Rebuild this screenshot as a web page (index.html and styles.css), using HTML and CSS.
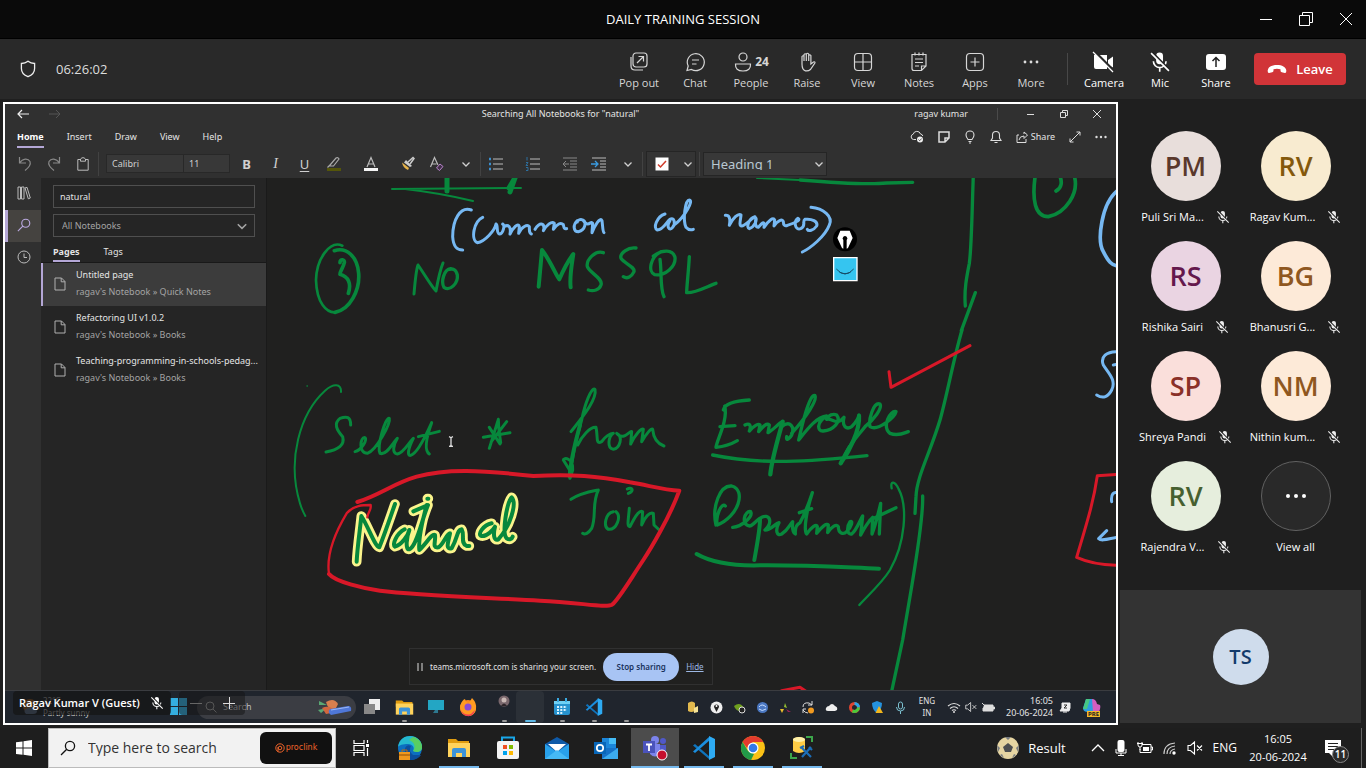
FILE: index.html
```html
<!DOCTYPE html>
<html lang="en">
<head>
<meta charset="utf-8">
<title>DAILY TRAINING SESSION</title>
<link rel="stylesheet" href="styles.css">
</head>
<body>
<svg class="defs" aria-hidden="true">
  <symbol id="mic-off" viewBox="0 0 16 16"><rect x="5.2" y="1" width="5" height="8.6" rx="2.5" fill="currentColor"/><path d="M3.2 7.5a4.6 4.6 0 0 0 9.2 0M7.8 12v3" fill="none" stroke="currentColor" stroke-width="1.2"/><path d="M2.6 1.2 14.8 13.6" stroke="#222" stroke-width="1.6"/><path d="M1.5 1.5 14.5 14.5" stroke="currentColor" stroke-width="1.2"/></symbol>
  <symbol id="chev" viewBox="0 0 10 10"><path d="M1.5 3.500 5 7l3.500-3.500" fill="none" stroke="currentColor" stroke-width="1.3"/></symbol>
  <symbol id="page" viewBox="0 0 12 14"><path d="M1 1h6.500L11 4.500V13H1zM7.200 1v3.800H11" fill="none" stroke="currentColor"/></symbol>
  <symbol id="find" viewBox="0 0 16 16"><circle cx="10" cy="6" r="4.600" fill="none" stroke="currentColor" stroke-width="1.300"/><path d="M6.700 9.300 1 15" stroke="currentColor" stroke-width="1.300"/></symbol>
  <symbol id="folder" viewBox="0 0 24 24"><path d="M1 3h8l2 2h11v6H1z" fill="#e09c10"/><path d="M1 7h22v14H1z" fill="#ffd35c"/><path d="M5 21v-7q0-2 2-2h10q2 0 2 2v7h-4v-4H9v4z" fill="#3c93d8"/></symbol>
  <symbol id="vscode" viewBox="0 0 24 24"><path d="M1 9.500 3 8l15 13-1 2z" fill="#0f74bd"/><path d="M1 15.500 3 17 18 4l-1-3z" fill="#1b8fdf"/><path d="m17 0 6 3v18l-6 3z" fill="#2eabf3"/></symbol>
  <symbol id="vol" viewBox="0 0 16 16"><path d="M1 5.500h2.500L7.500 2v12l-4-3.500H1zM10 5.500l5 5M15 5.500l-5 5" fill="none" stroke="currentColor" stroke-width="1.100"/></symbol>
</svg>

<header class="titlebar">
  <h1>DAILY TRAINING SESSION</h1>
  <div class="window-buttons">
    <button aria-label="Minimize"><svg width="14" height="14"><path d="M1 7.500h12" stroke="#fff"/></svg></button>
    <button aria-label="Restore"><svg width="14" height="14"><path d="M.5 3.500h10v10H.5zM3.500 3V.5h10v10H11" fill="none" stroke="#fff"/></svg></button>
    <button aria-label="Close"><svg width="14" height="14"><path d="M1 1l12 12M13 1 1 13" stroke="#fff"/></svg></button>
  </div>
</header>

<nav class="meeting-bar">
  <svg class="shield" width="16" height="18" viewBox="0 0 16 18"><path d="M8 1.200c2 1.600 4.200 2.300 6.600 2.300v5c0 4-2.600 6.700-6.600 8.200C4 15.200 1.400 12.500 1.400 8.500v-5C3.800 3.500 6 2.800 8 1.200z" fill="none" stroke="#eee" stroke-width="1.300"/></svg>
  <time>06:26:02</time>
  <div class="tools">
    <button><svg width="20" height="20" viewBox="0 0 20 20"><rect x="4" y="1" width="14" height="14" rx="3"/><path d="M2 5v9q0 4 4 4h8M8 11l6-6M9.500 4.500h5v5"/></svg>Pop out</button>
    <button><svg width="20" height="20" viewBox="0 0 20 20"><path d="M2 18.500 3.200 14A8.500 8.500 0 1 1 6.500 17.500zM7 8h7M7 12h4.500"/></svg>Chat</button>
    <button><span class="with-count"><svg width="20" height="20" viewBox="0 0 20 20"><circle cx="10" cy="5" r="4"/><path d="M2.500 12h15q.5 7-7.500 7t-7.500-7z"/></svg><b>24</b></span>People</button>
    <button><svg width="20" height="20" viewBox="0 0 20 20"><path d="M5 12V4.500q1-1.500 2 0V9M7 9V2.500q1.200-1.500 2.300 0V9M9.300 9V2q1.200-1.500 2.400 0v7M11.700 9V3.500q1.200-1.300 2.200 0V12l2.500-2q2-.5 1.500 1l-4.500 6.500q-2 1.800-5 1.300Q5 18 5 12"/></svg>Raise</button>
    <button><svg width="20" height="20" viewBox="0 0 20 20"><rect x="1.500" y="1.500" width="17" height="17" rx="3.500"/><path d="M10 1.500v17M1.500 10h17"/></svg>View</button>
    <button><svg width="20" height="20" viewBox="0 0 20 20"><path d="M3 2.500h14V14l-4.500 4.500H5q-2 0-2-2zM17 14h-4.500v4.500M6 .5v3M10 .5v3M14 .5v3M6 7h8M6 10.500h8M6 14h4"/></svg>Notes</button>
    <button><svg width="20" height="20" viewBox="0 0 20 20"><rect x="1.500" y="1.500" width="17" height="17" rx="3.500"/><path d="M10 5.500v9M5.500 10h9"/></svg>Apps</button>
    <button><svg width="20" height="20" viewBox="0 0 20 20"><g fill="#ddd" stroke="none"><circle cx="4" cy="10" r="1.400"/><circle cx="10" cy="10" r="1.400"/><circle cx="16" cy="10" r="1.400"/></g></svg>More</button>
    <span class="divider"></span>
    <button class="strong"><svg width="22" height="20" viewBox="0 0 22 20"><path d="M1 3h13v14H3q-2 0-2-2zM15 8l5-3.500v11L15 13z" fill="#fff" stroke="none"/><path d="M1.500-.5 20 18" stroke="#292929" stroke-width="2.500"/><path d="m0 0 20 20" stroke="#fff"/></svg>Camera</button>
    <button class="strong"><svg width="22" height="22" viewBox="0 0 16 16"><use href="#mic-off"/></svg>Mic</button>
    <button class="strong"><svg width="20" height="20" viewBox="0 0 20 20"><rect x="0" y="2" width="20" height="16" rx="3" fill="#fff" stroke="none"/><path d="M10 15V5.500M6.500 9 10 5.500 13.500 9" stroke="#222" stroke-width="1.500"/></svg>Share</button>
  </div>
  <button class="leave"><svg width="20" height="10" viewBox="0 0 20 10"><path d="M10 1c5 0 9 2 9.300 5.500q.2 2.800-1.500 2.500l-3-.7q-1.300-.3-1.300-1.800V5.300q-3.500-1-7 0v1.200q0 1.500-1.300 1.800l-3 .7Q.500 9.300.7 6.500C1 3 5 1 10 1z" fill="#fff"/></svg>Leave</button>
</nav>

<main class="stage">
  <section class="shared" aria-label="Shared screen">
    <div class="note-title">
      <div class="history">
        <svg width="12" height="10" viewBox="0 0 12 10"><path d="M12 5H1M5 1 1 5l4 4" fill="none" stroke="#eee" stroke-width="1.200"/></svg>
        <svg width="12" height="10" viewBox="0 0 12 10"><path d="M0 5h11M7 1l4 4-4 4" fill="none" stroke="#555"/></svg>
      </div>
      <span>Searching All Notebooks for "natural"</span>
      <div class="note-window">
        <span>ragav kumar</span><i></i>
        <svg width="10" height="10"><path d="M1 5.500h7" stroke="#ddd"/></svg>
        <svg width="10" height="10"><path d="M1.500 3.500h5v5h-5zM3.500 3V1.500h5v5H7" fill="none" stroke="#ddd"/></svg>
        <svg width="10" height="10"><path d="m1 1 8 8M9 1 1 9" stroke="#ddd"/></svg>
      </div>
    </div>
    <div class="note-menu">
      <nav><a href="#" class="on">Home</a><a href="#">Insert</a><a href="#">Draw</a><a href="#">View</a><a href="#">Help</a></nav>
      <div class="note-actions">
        <button aria-label="Sync"><svg width="14" height="14" viewBox="0 0 14 14"><path d="M6 9.500H3.500a2.700 2.700 0 0 1-.3-5.300A3.800 3.800 0 0 1 10.500 4q2 .3 2.300 2" fill="none" stroke="#ddd"/><circle cx="10" cy="9.500" r="3" fill="#eee"/><path d="m8.500 9.500 1.200 1.200 2-2.200" stroke="#333" fill="none" stroke-width=".8"/></svg></button>
        <button aria-label="Feed"><svg width="12" height="12" viewBox="0 0 12 12"><path d="M1 1h10v6L7 11H1zM11 7H7v4" fill="none" stroke="#ddd" stroke-width="1.500"/></svg></button>
        <button aria-label="Tips"><svg width="12" height="14" viewBox="0 0 12 14"><path d="M4 9.500Q2 7 2 5a4 4 0 0 1 8 0q0 2-2 4.500zM4.500 11.500h3M5 13h2" fill="none" stroke="#ddd" stroke-width="1.100"/></svg></button>
        <button aria-label="Notifications"><svg width="12" height="14" viewBox="0 0 12 14"><path d="M1 10.500h10L9.500 8V5q0-3.500-3.500-3.500T2.500 5v3zM4.500 12.500h3" fill="none" stroke="#ddd" stroke-width="1.100"/></svg></button>
        <button class="share-label"><svg width="12" height="12" viewBox="0 0 12 12"><path d="M3 4H1v7.500h9V8M3 9q.5-4 5-4v2.500L11.500 4 8 1v2" fill="none" stroke="#ddd"/></svg>Share</button>
        <button aria-label="Full screen"><svg width="12" height="12" viewBox="0 0 12 12"><path d="M1 11 11 1M7.500 1H11v3.500M1 7.500V11h3.500" fill="none" stroke="#ddd"/></svg></button>
        <button aria-label="More"><svg width="12" height="4"><circle cx="1.500" cy="2" r="1.200" fill="#ddd"/><circle cx="6" cy="2" r="1.200" fill="#ddd"/><circle cx="10.500" cy="2" r="1.200" fill="#ddd"/></svg></button>
      </div>
    </div>
    <div class="ribbon">
      <button aria-label="Undo"><svg width="14" height="16" viewBox="0 0 14 16"><path d="M1.500 1v6H8M1.500 7C5 2 10 2 12 5.500q1.500 4-5 9" fill="none" stroke="#888" stroke-width="1.200"/></svg></button>
      <button aria-label="Redo"><svg width="14" height="16" viewBox="0 0 14 16"><path d="M12.500 1v6H6M12.500 7C9 2 4 2 2 5.500q-1.500 4 5 9" fill="none" stroke="#888" stroke-width="1.200"/></svg></button>
      <button aria-label="Paste" class="slim"><svg width="12" height="14" viewBox="0 0 12 14"><path d="M3 2.500H.8v10.700h10.400V2.500H9M3.500 4.200h5V2L7 .8H5L3.500 2z" fill="none" stroke="#bbb"/></svg></button>
      <i></i>
      <select class="font-name" aria-label="Font"><option>Calibri</option></select><select class="font-size" aria-label="Font size"><option>11</option></select>
      <button class="bold">B</button><button class="italic">I</button><button class="under">U</button>
      <button aria-label="Highlight"><svg width="16" height="16" viewBox="0 0 16 16"><path d="m4 9 6-7q2-1 3 1L7.500 10H4.500zM1.500 11.500 4 9" fill="none" stroke="#aaa" stroke-width="1.200"/><path d="M1 12h14v3H1z" fill="#55560a"/></svg></button>
      <button class="gap" aria-label="Font colour"><svg width="16" height="16" viewBox="0 0 16 16"><path d="M4 11 8 1.500 12 11M5.300 8h5.400" fill="none" stroke="#bbb" stroke-width="1.200"/><path d="M1 12h14v3H1z" fill="#f4f4f4"/></svg></button>
      <button class="gap" aria-label="Format painter"><svg width="16" height="16" viewBox="0 0 16 16"><path d="m8 6 5-4.500 1 1L10 8" fill="none" stroke="#ccc" stroke-width="1.500"/><path d="m6 4 6 6-2 1-6-4.500z" fill="#ccc"/><path d="m2 6.500 7 5.500-1 2Q3 12 2 6.500z" fill="#e5b24a"/></svg></button>
      <button aria-label="Clear formatting"><svg width="16" height="16" viewBox="0 0 16 16"><path d="M1.500 11 5.500 1.500 9 9M3 8h4.500" fill="none" stroke="#bbb" stroke-width="1.200"/><path d="m7.500 12 3.500-4 3 2.500-3.500 4z" fill="#423048" stroke="#b884cc"/></svg></button>
      <button aria-label="More formatting"><svg width="10" height="10"><use href="#chev"/></svg></button><i></i>
      <button aria-label="Bullets"><svg width="16" height="14" viewBox="0 0 16 14"><path d="M5 2h10M5 7h10M5 12h10" stroke="#bbb"/><path d="M1 2h2M1 7h2M1 12h2" stroke="#3a8fd0" stroke-width="2.500"/></svg></button>
      <button class="gap" aria-label="Numbering"><svg width="16" height="14" viewBox="0 0 16 14"><path d="M5 2h10M5 7h10M5 12h10" stroke="#bbb"/><path d="M2 0v3.500M1 5.500h2l-2 3h2M1 10.500h2v3H1" stroke="#2d6f9e" fill="none"/></svg></button>
      <button class="gap" aria-label="Decrease indent"><svg width="16" height="14" viewBox="0 0 16 14"><path d="M1 1h14M8 4h7M8 7h7M8 10h7M1 13h14M7 7H1.500M4 4 1 7l3 3" fill="none" stroke="#888"/></svg></button>
      <button aria-label="Increase indent"><svg width="16" height="14" viewBox="0 0 16 14"><path d="M1 1h14M9 4h6M9 7h6M9 10h6M1 13h14" stroke="#bbb"/><path d="M0 7h6M4 4l3 3-3 3" fill="none" stroke="#3a9be0" stroke-width="1.300"/></svg></button>
      <button aria-label="More paragraph"><svg width="10" height="10"><use href="#chev"/></svg></button><i></i>
      <button class="todo" aria-label="To-do tag"><svg width="14" height="14"><path d="M.5.5h13v13H.5z" fill="#fff"/><path d="m3 7.500 2.500 2.500L11 4" fill="none" stroke="#d03b2a" stroke-width="1.500"/></svg><svg width="10" height="10"><use href="#chev"/></svg></button><i></i>
      <label class="heading-box"><select aria-label="Style"><option>Heading 1</option></select><svg width="10" height="10"><use href="#chev"/></svg></label>
    </div>

    <div class="note-body">
      <nav class="rail">
        <button aria-label="Notebooks"><svg width="14" height="14" viewBox="0 0 14 14"><path d="M1 1h2.500v12H1zM4.500 1H7v12H4.500zM8 2l2-.7L13.300 12l-2 .8z" fill="none" stroke="#bbb"/></svg></button>
        <button class="on" aria-label="Search"><svg width="14" height="14"><use href="#find"/></svg></button>
        <button aria-label="Recent"><svg width="14" height="14" viewBox="0 0 14 14"><circle cx="7" cy="7" r="6" fill="none" stroke="#bbb"/><path d="M7 3.500V7.500h3" fill="none" stroke="#bbb"/></svg></button>
      </nav>
      <aside class="results">
        <div class="search-form">
          <input type="text" value="natural" aria-label="Search notes">
          <label><select aria-label="Scope"><option>All Notebooks</option></select><svg width="12" height="12"><use href="#chev"/></svg></label>
        </div>
        <nav class="result-tabs"><a href="#" class="on">Pages</a><a href="#">Tags</a></nav>
        <ul>
          <li class="on"><svg width="12" height="14"><use href="#page"/></svg><div><b>Untitled page</b><span>ragav's Notebook » Quick Notes</span></div></li>
          <li><svg width="12" height="14"><use href="#page"/></svg><div><b>Refactoring UI v1.0.2</b><span>ragav's Notebook » Books</span></div></li>
          <li><svg width="12" height="14"><use href="#page"/></svg><div><b>Teaching-programming-in-schools-pedag...</b><span>ragav's Notebook » Books</span></div></li>
        </ul>
      </aside>
      <div class="canvas">
        <svg class="ink" viewBox="267 178 849 512" preserveAspectRatio="xMidYMid slice">
          <g class="green">
            <path d="M392 189 521 188M405 189Q440 193 473 201M757 178 800 180" stroke-width="2"/>
            <path d="M447 176v15M516 176 509 188M510 192 515 178" stroke-width="5"/>
            <path d="M414 294C415 282 416 270 418 265 425 275 431 286 436 291 438 280 440 270 443 263" stroke-width="3"/>
          </g>
          <g transform="translate(440 100) scale(.33333)">
            <g class="blue" stroke-width="9">
              <path d="M94 330C60 318 38 360 38 410 40 440 50 450 68 450"/>
              <path d="M128 352C100 365 92 420 112 428 135 425 165 390 168 372 175 375 168 400 178 402 190 402 195 375 188 372M192 380C205 372 214 380 210 402 218 385 235 365 238 380L236 400C245 380 262 372 268 380 268 392 268 400 274 402"/>
              <path d="M285 388C300 365 312 370 312 385L310 392C320 375 335 362 343 370L340 388C352 372 362 366 370 374 372 385 374 388 380 386"/>
              <path d="M412 362C398 375 400 395 415 395 437 390 440 365 428 360 420 356 412 362 412 366M430 362C446 385 452 360 458 370L456 398C465 375 480 350 486 362 488 375 488 395 492 398"/>
              <path d="M675 342C650 350 638 385 652 390 670 390 680 365 690 358 702 350 708 370 698 382 688 395 678 380 690 362M704 374C735 350 762 300 748 300 735 300 728 360 738 382 745 390 755 390 760 388"/>
              <path d="M856 346C868 345 872 355 868 376 878 355 895 338 903 345 903 355 895 378 905 378 915 378 935 355 945 350 925 355 918 385 928 386 945 380 950 360 948 355 945 365 945 382 955 382 965 370 975 358 972 382 985 362 1000 350 1004 360L1002 378C1012 362 1028 355 1030 365 1030 375 1035 380 1042 376 1060 370 1085 360 1074 355 1060 365 1065 392 1082 386 1100 378 1085 365 1095 358 1115 355 1135 365 1130 378 1120 392 1105 395 1102 388"/>
              <path d="M1113 322C1150 325 1180 350 1168 375 1155 410 1110 445 1087 456"/>
            </g>
            <g class="green" stroke-width="10">
              <path d="M32 506C12 508 2 545 12 562 30 575 55 550 52 525 48 508 38 505 28 508"/>
              <path d="M296 560 306 450C330 480 350 530 358 538 370 510 390 475 400 462 396 490 388 530 392 562" stroke-width="12"/>
              <path d="M490 458C465 450 438 480 442 500 450 520 490 535 483 555 478 570 460 575 445 570M588 444C565 440 538 460 543 475 555 492 585 500 582 515 575 530 562 538 550 530"/>
              <path d="M664 455C632 468 622 515 644 524 676 528 708 500 705 472 698 448 668 448 640 468M660 478C665 510 660 570 672 590M748 470C746 510 740 560 740 578 765 580 800 560 828 550"/>
            </g>
          </g>
          <g class="green" transform="translate(0 180) scale(.33333)">
            <path d="M1027 197C990 180 950 235 948 300 950 370 980 398 1005 397" stroke-width="8"/>
            <path d="M1005 397C1050 390 1080 330 1076 280 1072 230 1040 200 1003 212M1020 248C1020 235 1035 238 1033 248 1030 262 1018 278 1020 283 1045 290 1055 310 1045 340" stroke-width="11"/>
            <path d="M921 618h1" stroke-width="4"/>
          </g>
          <g transform="translate(800 100) scale(.33333)">
            <path class="green" d="M0 240C120 250 200 255 260 249L338 247M520 225C516 330 515 440 508 490 500 530 492 570 496 618M526 578 484 692" stroke-width="10"/>
            <path class="green" d="M706 225C695 300 705 350 745 350 795 340 840 280 822 225M778 225C788 245 785 265 768 273" stroke-width="11"/>
            <path class="blue" d="M952 272C905 310 890 420 910 455 925 485 935 495 952 498" stroke-width="11"/>
            <circle cx="135" cy="418" r="36" fill="#000"/>
            <path d="M121 392h28l9 22-14 30-4 2v-26a7 7 0 1 0-10 0v26l-4-2-14-30z" fill="#fff"/>
            <path d="M101 473h70v69h-70z" fill="#35c5f0" stroke="#fff" stroke-width="4"/>
            <path d="M109 507q26 30 52 0M118 516q17 10 34 0" fill="none" stroke="#164b66" stroke-width="3"/>
          </g>
          <g transform="translate(280 370) scale(.33333)">
            <g class="green" stroke-width="9">
              <path d="M183 66C185 40 160 40 135 62 60 130 20 270 60 400Q66 420 76 438" stroke-width="6"/>
              <path d="M212 165C212 140 200 138 180 145 160 160 170 180 188 200 195 225 175 240 138 246M225 245C245 240 262 210 255 203 240 200 235 250 262 250 290 240 332 160 328 145 316 140 290 230 300 250 320 258 340 215 352 205 340 225 335 250 352 252 370 250 385 220 400 205 385 235 380 258 392 256 415 250 445 180 455 158 440 200 430 240 448 252M415 200 478 184"/>
              <path d="M655 148 628 235M655 148C655 180 660 200 662 218M610 202 690 188M628 172 660 222M680 155 634 215"/>
              <path d="M873 185C900 150 952 90 945 58 935 50 915 100 905 150 890 200 875 270 870 325L878 300C880 262 850 262 850 270L872 305M893 225C905 200 930 170 948 172 955 200 945 225 965 215 975 200 990 190 1000 190 985 200 980 235 1000 238 1020 235 1030 200 1010 190 1030 215 1050 180 1055 185L1052 222C1065 195 1085 172 1090 178L1085 215C1100 190 1115 172 1118 178 1120 200 1130 220 1152 228"/>
              <path d="M900 165C888 210 872 265 869 320" stroke-width="12"/>
              <path d="M873 388C900 370 930 365 955 360 935 400 950 440 935 475 925 490 915 495 908 490M1000 425C975 430 970 470 985 478 1010 480 1025 440 1008 425M1048 415C1045 450 1040 470 1050 470 1070 430 1080 420 1088 425L1085 465C1095 440 1110 425 1120 430L1122 465 1138 480M1042 357C1055 350 1065 362 1045 370"/>
            </g>
            <defs><path id="mark" d="M230 575C232 530 240 480 244 438 265 470 285 530 298 532 315 490 335 430 345 402M374 478C350 490 335 525 345 530 365 525 385 495 388 480 380 500 375 540 388 538 410 530 425 450 444 405L400 424M440 405C425 460 415 510 418 540 440 520 455 490 465 495 468 515 455 535 475 532 490 525 500 490 510 490 505 515 495 540 515 535 535 500 530 480 545 478 555 495 540 520 560 528L568 528M635 460C610 465 590 495 605 498 620 500 640 480 645 470 640 490 640 515 655 508 690 470 712 400 695 382 680 400 665 490 680 505 690 512 696 505 698 500M442 386h3"/></defs>
            <use href="#mark" class="yellow" stroke-width="29"/>
            <use href="#mark" class="green" stroke-width="12"/>
            <path class="red" d="M232 396C300 375 340 340 410 320 500 295 600 300 760 318 880 312 950 318 1050 337 1110 347 1150 360 1198 362 1170 440 1110 540 1090 570 1050 630 1015 690 996 704 975 715 900 697 780 692 600 682 400 675 300 662 250 655 165 635 147 612" stroke-width="12"/>
            <path class="red" d="M147 612C138 550 170 480 200 430 220 405 250 405 272 405 275 420 262 430 262 442" stroke-width="7"/>
            <path d="M507 200q6 2 6 5v20q0 4-6 4M519 200q-6 2-6 5v20q0 4 6 4" fill="none" stroke="#ddd" stroke-width="4"/>
          </g>
          <g transform="translate(660 330) scale(.33333)">
            <g class="green" stroke-width="10">
              <path d="M906 0C880 90 860 200 840 270 810 370 770 440 768 500L765 550"/>
              <path d="M788 498C790 560 770 680 755 770L733 900 728 930 695 1084"/>
              <path d="M190 240C195 220 230 212 268 210M194 228C205 270 170 330 168 352 190 350 215 342 232 332M180 290 225 287"/>
              <path d="M255 285C268 278 275 285 268 303 285 285 295 280 300 285L296 305C310 288 320 278 328 285L324 308C340 300 355 280 368 275M365 290C390 270 405 290 395 315 385 330 378 332 380 320M395 310C440 260 472 210 465 197 448 190 425 290 416 330 440 300 470 260 500 258 470 275 470 305 490 303 520 300 545 275 530 255 520 250 505 255 500 268 515 262 530 290 552 262 545 290 560 300 575 290 590 275 597 260 597 255M555 375C570 340 600 310 615 290 640 270 668 235 660 222 640 215 625 270 630 290 655 305 705 260 708 245 690 240 665 290 690 310 715 320 735 308 745 305"/>
              <path d="M368 275C350 340 335 390 331 433M597 258C600 300 570 360 542 400L570 350" stroke-width="13"/>
              <path d="M158 375C300 405 450 395 621 377"/>
              <path d="M168 585C155 530 180 465 215 468 260 480 235 560 172 585 165 560 185 515 196 528M218 592C245 590 280 560 272 545 255 540 240 585 270 588 280 585 290 570 300 565 330 545 340 580 315 600 335 600 345 580 357 578 345 600 350 620 365 612 385 600 388 585 398 575 396 600 400 610 406 612 405 600 405 585 420 578 430 560 448 515 457 488 440 540 430 600 440 612 455 590 470 580 472 590L470 610C485 590 500 578 505 585L503 608C515 590 530 580 535 590 535 610 550 615 560 605 575 590 580 570 570 575 560 590 560 615 575 612 590 600 600 570 608 558L602 615C615 590 630 570 638 562L636 612C645 590 655 550 662 520L658 612M630 570 708 533M418 548 455 536"/>
              <path d="M300 568C300 600 290 650 283 690M110 672C150 695 220 708 300 706 450 705 550 712 657 716" stroke-width="12"/>
              <path d="M695 475C690 450 705 455 715 475 745 530 735 640 690 720 665 760 620 800 598 825" stroke-width="7"/>
            </g>
            <path class="red" d="M687 125 693 172 930 47M1372 433 1312 437C1300 520 1280 580 1250 682 1290 700 1330 705 1372 706M365 1082 420 1072 438 1084" stroke-width="9"/>
            <path class="blue" d="M1372 65C1340 65 1320 80 1330 105 1345 130 1370 150 1355 180 1345 200 1330 208 1310 195M1360 105 1372 103M1355 515C1352 490 1362 485 1372 488M1340 602 1316 626C1325 635 1350 625 1372 622" stroke-width="9"/>
          </g>
        </svg>
        <div class="share-notice">
          <svg width="6" height="8"><path d="M1 0v8M5 0v8" stroke="#ddd"/></svg>
          <span>teams.microsoft.com is sharing your screen.</span>
          <button>Stop sharing</button><a href="#">Hide</a>
        </div>
      </div>
    </div>

    <div class="remote-bar">
      <div class="weather"><svg width="18" height="18"><circle cx="9" cy="8" r="7" fill="#b66a25"/><path d="M5 16q-4-4 2-6 6-3 9 3 0 3-4 3z" fill="#6c83a5"/></svg><div>32°C<br>Partly sunny</div></div>
      <svg class="win11" width="18" height="18"><path d="M0 0h8v8H0zM9 0h8v8H9zM0 9h8v8H0zM9 9h8v8H9z" fill="#34aee0"/></svg>
      <label class="remote-search"><svg width="12" height="12" viewBox="0 0 12 12"><circle cx="5" cy="5" r="4" fill="none" stroke="#999"/><path d="m8 8 3.500 3.500" stroke="#999"/></svg><input type="text" placeholder="Search" aria-label="Search"><svg width="36" height="18" viewBox="0 0 36 18"><path d="M9 4q8-5 12 2l-3 6q-7 0-9-8z" fill="#d97f4e"/><path d="m2 3 8 4-8 0zM1 12l9-2-6 5z" fill="#59a873"/><path d="M5 10q8-4 14 4l-10 2z" fill="#d2683e"/><path d="m13 11 18-3q4 0 3 5l-20 4q-4-3-1-6z" fill="#4f77d8"/><path d="m14 12 18-3" stroke="#9bb7f5"/></svg></label>
      <div class="remote-apps">
        <span><svg width="18" height="18"><path d="M6 1h11v11H6z" fill="#eee"/><path d="M1 6h11v10H1z" fill="#888"/></svg></span>
        <span class="run"><svg width="19" height="19"><use href="#folder"/></svg></span>
        <span><svg width="18" height="16"><path d="M1 1h16v10H1z" fill="#23a6c4"/><path d="M8 11h3v3H6z" fill="#2d7890"/></svg></span>
        <span><svg width="18" height="18" viewBox="0 0 18 18"><circle cx="9" cy="10" r="8" fill="#ff8a1e"/><path d="M1 8q2-6 5-7 1 4 4 4l3-5q5 5 4 11-1 6-7 7Q1 17 1 8z" fill="#ff9b22"/><path d="M2 12q3 6 10 4l4-4q-2 7-8 6-5-1-6-6z" fill="#ef3b55"/><circle cx="9" cy="9" r="3.500" fill="#8a4bd6"/></svg></span>
        <span class="run person"><svg width="12" height="12"><circle cx="6" cy="6" r="5.500" fill="#79676c"/><circle cx="6" cy="5" r="2.500" fill="#c9b8b4"/><path d="M3 11q3-5 6 0z" fill="#2d2428"/></svg></span>
        <span class="run current"></span>
        <span class="run"><svg width="18" height="18" viewBox="0 0 18 18"><rect x="1" y="3" width="16" height="14" rx="2" fill="#2793cf"/><path d="M1 3h16v3H1z" fill="#6fd0f4"/><path d="M5 0v4M13 0v4" stroke="#3aa9e0" stroke-width="2"/><path d="M4 9h10M4 12h10M4 15h6" stroke="#d9f2ff" stroke-width="2" stroke-dasharray="2 1.300"/></svg></span>
        <span class="run"><svg width="18" height="18" viewBox="0 0 24 24"><use href="#vscode"/></svg></span>
        <span class="run"></span>
      </div>
      <div class="remote-tray">
        <svg width="13" height="13"><path d="M1 2q4-3 7 0v8q-4 2-7 0z" fill="#e2b94d"/><path d="m7 7 4-2v6l-4 1z" fill="#f6e396"/></svg>
        <svg width="13" height="13"><circle cx="6.500" cy="6.500" r="6" fill="#eee"/><path d="M6.500 11 4 6a2.500 2.500 0 1 1 5 0z" fill="#222"/><circle cx="6.500" cy="5" r="1" fill="#fff"/></svg>
        <svg width="13" height="13"><path d="M1 5q6-5 10 2l-4 3Q3 10 1 5z" fill="#6d9e1e"/><circle cx="9" cy="9" r="3" fill="#222" stroke="#ddd"/></svg>
        <svg width="13" height="13"><circle cx="6.500" cy="6.500" r="5.500" fill="#4b78c2"/><path d="M3 6q3-4 7 0M3 8q3 3 7 0" fill="none" stroke="#c6ddff"/></svg>
        <svg width="13" height="13"><path d="m6 2 2 5-3-1z" fill="#93bf31"/><path d="m1 8 4 0-2 4z" fill="#e9bd2c"/><path d="m7 8 5 3-3 0z" fill="#9a2459"/></svg>
        <svg width="13" height="13"><path d="M1 6q0-5 6-4l3 2M10 0v4H6M1 12V8h3M1 9q2 3 5 3" fill="none" stroke="#ddd"/><circle cx="9" cy="9.500" r="3" fill="#f19a20"/></svg>
        <svg width="13" height="13"><path d="M3 10q-3 0-2-3 1-2 3-2 3-4 6 0 3 1 2 4l-2 1z" fill="#eee"/></svg>
        <svg width="13" height="13"><circle cx="6.500" cy="6.500" r="4" fill="none" stroke="#e04430" stroke-width="3"/><path d="M6.500 2.500a4 4 0 0 1 4 4" fill="none" stroke="#27a6e8" stroke-width="3"/><path d="M10.500 6.500a4 4 0 0 1-6 3.400" fill="none" stroke="#4aca3a" stroke-width="3"/></svg>
        <svg width="13" height="13"><path d="M6 0 11 2q0 7-5 10Q1 9 1 2z" fill="#2492de"/><path d="m8 5 4 7H4.500z" fill="#f2b71d"/></svg>
        <svg width="13" height="13"><rect x="4.500" y="1" width="4" height="7" rx="2" fill="none" stroke="#7bc0d0"/><path d="M2.500 6q0 4 4 4t4-4M6.500 10v3" fill="none" stroke="#7bc0d0"/></svg>
      </div>
      <div class="remote-lang">ENG<br>IN</div>
      <div class="remote-status">
        <svg width="14" height="12" viewBox="0 0 14 12"><path d="M1 5q6-5 12 0M3 7.500q4-3.500 8 0M5 9.500q2-1.500 4 0" fill="none" stroke="#ddd" stroke-width="1.200"/><circle cx="7" cy="11" r="1" fill="#ddd"/></svg>
        <svg width="12" height="12"><use href="#vol"/></svg>
        <svg width="14" height="12"><path d="M3 4h9v6H2V7M12 6h1.500v2H12M1 2l3 3" fill="#ddd" stroke="#ddd"/></svg>
      </div>
      <div class="remote-clock">16:05<br>20-06-2024</div>
      <svg width="12" height="12"><path d="M3 2h8v5l-1 3H1l2-3zM4 11h4" fill="#eee" stroke="#eee"/><path d="M5 4h3L5 7h3" fill="none" stroke="#333"/></svg>
      <div class="copilot"><svg width="18" height="18" viewBox="0 0 18 18"><path d="M3 1h6l4 4-3 9H5q-5 0-5-4z" fill="#2d9de0"/><path d="M3 1h4L4 11H0z" fill="#46c784"/><path d="M9 1q4 0 5 5l3 1q1 2-1 7h-6z" fill="#d45ec0"/></svg><b>PRE</b></div>
      <div class="presenter"><span>Ragav Kumar V (Guest)</span><svg width="14" height="14"><use href="#mic-off"/></svg></div>
      <div class="zoomer"><button aria-label="Zoom out"><svg width="12" height="12"><path d="M0 6.500h12" stroke="#666"/></svg></button><button aria-label="Zoom in"><svg width="12" height="12"><path d="M0 6.500h12M6.500 0v12" stroke="#ddd"/></svg></button></div>
    </div>
  </section>

  <aside class="people">
    <ul>
      <li><span class="avatar c1">PM</span><div><span>Puli Sri Ma...</span><svg width="14" height="14"><use href="#mic-off"/></svg></div></li>
      <li><span class="avatar c2">RV</span><div><span>Ragav Kum...</span><svg width="14" height="14"><use href="#mic-off"/></svg></div></li>
      <li><span class="avatar c3">RS</span><div><span>Rishika Sairi</span><svg width="14" height="14"><use href="#mic-off"/></svg></div></li>
      <li><span class="avatar c4">BG</span><div><span>Bhanusri G...</span><svg width="14" height="14"><use href="#mic-off"/></svg></div></li>
      <li><span class="avatar c5">SP</span><div><span>Shreya Pandi</span><svg width="14" height="14"><use href="#mic-off"/></svg></div></li>
      <li><span class="avatar c4">NM</span><div><span>Nithin kum...</span><svg width="14" height="14"><use href="#mic-off"/></svg></div></li>
      <li><span class="avatar c6">RV</span><div><span>Rajendra V...</span><svg width="14" height="14"><use href="#mic-off"/></svg></div></li>
      <li><button class="avatar more" aria-label="View all"><svg width="22" height="6"><g fill="#fff"><circle cx="3" cy="3" r="2"/><circle cx="11" cy="3" r="2"/><circle cx="19" cy="3" r="2"/></g></svg></button><div><span>View all</span></div></li>
    </ul>
    <div class="self"><span class="avatar c7">TS</span></div>
  </aside>
</main>

<footer class="taskbar">
  <button class="start" aria-label="Start"><svg width="16" height="16"><path d="m0 2.300 6.500-.9v6.200H0zM7.500 1.200 16 0v7.600H7.500zM0 8.600h6.500v6.200L0 13.900zM7.500 8.600H16V16l-8.500-1.200z" fill="#fff"/></svg></button>
  <label class="search"><svg width="16" height="16"><use href="#find"/></svg><input type="text" placeholder="Type here to search" aria-label="Search"><span class="brand"><svg width="10" height="10"><circle cx="5" cy="5" r="4.200" fill="none" stroke="#f0642a"/><circle cx="5" cy="5" r="1.800" fill="none" stroke="#f0642a"/><path d="M3 4v5" stroke="#f0642a"/></svg>proclink</span></label>
  <button class="view" aria-label="Task view"><svg width="17" height="16"><path d="M1 0v3.500h10V0M1 16v-3.500h10V16M1 5.500h10v5H1zM14.500 0v3M14.500 8v8" fill="none" stroke="#fff" stroke-width="1.200"/><path d="M13 4h3v3h-3z" fill="#fff"/></svg></button>
  <div class="apps">
    <button aria-label="Edge"><svg width="24" height="24" viewBox="0 0 24 24"><circle cx="12" cy="12" r="12" fill="#0c6fc0"/><path d="M0 11C1 3 7 0 12 0c8 0 12 6 12 11 0 5-5 6-9 4 2-3 0-7-5-7C5 8 1 9 0 11z" fill="#25b9cf"/><path d="M15 1c6 1 9 6 9 10 0 5-5 6-9 4 3-3 2-9-4-11z" fill="#58ce62"/><path d="M7 12q2-4 6-2-3 5 2 9l8 0q-3 5-11 5-6-3-5-12z" fill="#0b4f9e"/><path d="M1 16h11v8H1z" fill="#f0981c"/><path d="M1 19h11" stroke="#8c4d08"/><path d="M4 16v-2h5v2" fill="none" stroke="#b56d12"/></svg></button>
    <button class="open" aria-label="File Explorer"><svg width="24" height="24"><use href="#folder"/></svg></button>
    <button aria-label="Store"><svg width="24" height="24"><path d="M6 7V1.500h12V7" fill="none" stroke="#19a6e8" stroke-width="2"/><rect x="1" y="5" width="22" height="18" rx="2" fill="#f4f4f4"/><path d="M7 9h4v4H7z" fill="#f05022"/><path d="M13 9h4v4h-4z" fill="#7fba00"/><path d="M7 15h4v4H7z" fill="#00a3ee"/><path d="M13 15h4v4h-4z" fill="#ffb900"/></svg></button>
    <button aria-label="Mail"><svg width="24" height="24"><path d="M0 8 12 1l12 7v14H0z" fill="#0f5aa8"/><path d="M3 8h18l-9 8z" fill="#fff"/><path d="m0 8 12 8 12-8v15H0z" fill="#28a0ea"/><path d="m0 23 12-9 12 9z" fill="#46b9f5"/></svg></button>
    <button aria-label="Outlook"><svg width="24" height="24"><path d="M8 2h14v14H8z" fill="#1b86da"/><path d="M15 2h7v6h-7z" fill="#45bcf5"/><path d="M8 12h16v11H8z" fill="#1672c8"/><path d="m8 23 16-11v11z" fill="#3cacf0"/><path d="M0 6h12v12H0z" fill="#0866b8"/><circle cx="6" cy="12" r="3.200" fill="none" stroke="#fff" stroke-width="1.700"/></svg></button>
    <button class="open active" aria-label="Teams"><svg width="26" height="26" viewBox="0 0 26 26"><circle cx="13" cy="5" r="4" fill="#7b83eb"/><circle cx="21" cy="6" r="3" fill="#5059c9"/><path d="M8 9h10v10q-5 5-10 0z" fill="#7b83eb"/><path d="M18 10h6v7q-3 3-6 1z" fill="#5059c9"/><path d="M1 6h12v12H1z" fill="#4b53bc"/><path d="M4 9.500h6M7 9.500V16" stroke="#fff" stroke-width="1.800"/><circle cx="20" cy="20" r="5" fill="#c50f2e" stroke="#fff"/></svg></button>
    <button class="open" aria-label="Visual Studio Code"><svg width="24" height="24"><use href="#vscode"/></svg></button>
    <button class="open" aria-label="Chrome"><svg width="24" height="24"><circle cx="12" cy="12" r="12" fill="#fbc116"/><path d="M1.600 6A12 12 0 0 1 22.400 6H12L6 12z" fill="#e33b2e"/><path d="M1.600 6 7 15l6 3-3 6A12 12 0 0 1 1.600 6z" fill="#229a48"/><circle cx="12" cy="12" r="5.500" fill="#fff"/><circle cx="12" cy="12" r="4.300" fill="#3479e8"/></svg></button>
    <button class="open" aria-label="Database tool"><svg width="24" height="24"><path d="M3 3q6-4 12 0v12q-6 4-12 0z" fill="#ffcc45"/><ellipse cx="9" cy="3.500" rx="6" ry="2.500" fill="#fff0a8"/><path d="M16 1h6v5M1 17v5h6" fill="none" stroke="#3ca64a" stroke-width="2"/><path d="m12 12 9 9M21 11l-9 10M10 12l4-2M19 11l3 3" stroke="#1c6eb8" stroke-width="2.200"/></svg></button>
  </div>
  <button class="news"><svg width="22" height="22"><circle cx="11" cy="11" r="11" fill="#e6d5a2"/><path d="m11 6 5 4-2 5H8l-2-5z" fill="#4c4e50"/><path d="m8 0 6 0-3 3zM0 8l3 3-2 4zM22 8l-3 3 2 4zM5 17l2 4-4-3zM17 17l-2 4 4-3z" fill="#777b80"/></svg>Result</button>
  <div class="tray">
    <svg width="14" height="14"><path d="m1 10 6-6 6 6" fill="none" stroke="#fff" stroke-width="1.300"/></svg>
    <svg width="12" height="16"><rect x="2.500" y="0" width="7" height="12" rx="2" fill="#fff"/><path d="M1 9v4h10V9M6 13v3M3 15.500h6" fill="none" stroke="#fff"/></svg>
    <svg width="16" height="14"><path d="M5 3.500h9v8H3V8M14 6h1.500v3H14M1 1v3q0 2 2 2t2-2V1M0 2.500h6M3 6v3" fill="none" stroke="#fff"/><path d="M6 6h6v4H6z" fill="#fff"/></svg>
    <svg width="14" height="14"><path d="M1 13Q1 3 12 2M4 13Q4 6 12 5M7 13Q7 9 12 8" fill="none" stroke="#ccc" stroke-width="1.200"/><circle cx="11" cy="12" r="1.700" fill="#fff"/></svg>
    <svg width="16" height="16"><use href="#vol"/></svg>
    <span>ENG</span>
  </div>
  <div class="clock">16:05<br>20-06-2024</div>
  <button class="alerts" aria-label="Notifications, 11 new"><svg width="16" height="17"><path d="M0 0h16v13H8v4l-4-4H0z" fill="#fff"/><path d="M3 3.500h10M3 6.500h10M3 9.500h6" stroke="#222"/></svg><b>11</b></button>
</footer>
</body>
</html>
```
FILE: styles.css
```css
* { box-sizing: border-box; }
body {
  margin: 0;
  min-height: 100vh;
  display: flex;
  flex-direction: column;
  background: #1f1f1f;
  color: #fff;
  font: 12px/16px "Open Sans", "Noto Sans", sans-serif;
}
.defs { position: absolute; width: 0; height: 0; }
button { border: 0; padding: 0; background: none; color: inherit; font: inherit; display: flex; align-items: center; justify-content: center; }
input, select { appearance: none; border: 0; padding: 0; background: none; color: inherit; font: inherit; min-width: 0; border-radius: 0; }
a { color: inherit; text-decoration: none; }
ul { list-style: none; margin: 0; padding: 0; }
svg { flex: none; overflow: visible; }

/* window title */
.titlebar { height: 39px; display: grid; grid-template-columns: 1fr auto 1fr; align-items: center; background: #0a0a0a; border-bottom: 1px solid #000; }
.titlebar h1 { grid-column: 2; margin: 0; font-size: 13px; font-weight: 400; }
.window-buttons { display: flex; justify-content: flex-end; }
.window-buttons button { width: 40px; height: 38px; }

/* meeting toolbar */
.meeting-bar { height: 60px; display: flex; align-items: center; padding: 0 20px; background: #292929; }
.meeting-bar time { margin-left: 20px; font-size: 13px; color: #ddd; }
.tools { display: flex; align-items: center; margin: 0 10px 0 auto; }
.tools button { width: 56px; height: 44px; padding-top: 3px; flex-direction: column; justify-content: space-between; color: #d6d6d6; font-size: 11px; }
.tools button > svg, .tools .with-count { height: 24px; }
.tools svg { fill: none; stroke: #d6d6d6; stroke-width: 1.2; }
.tools .strong { color: #fff; font-weight: 500; }
.tools .strong svg use { stroke: none; }
.with-count { display: flex; align-items: center; gap: 2px; font-size: 12px; }
.divider { width: 1px; height: 32px; margin: 0 8px; background: #484848; }
.leave { gap: 9px; width: 92px; height: 32px; border-radius: 4px; background: #d13438; font-size: 13px; font-weight: 600; }

.stage { flex: 1; display: flex; min-height: 0; }

/* shared screen */
.shared { flex: 1; min-width: 0; margin: 3px 2px 3px 3px; border: 2px solid #fff; display: flex; flex-direction: column; background: #303030; color: #e4e4e4; font: 9px/12px "Noto Sans", sans-serif; }
.note-title { height: 20px; display: grid; grid-template-columns: 1fr auto 1fr; align-items: center; }
.history { display: flex; gap: 20px; padding-left: 12px; }
.note-window { display: flex; align-items: center; justify-content: flex-end; gap: 23px; padding-right: 14px; }
.note-window i { width: 1px; height: 12px; margin: 0 5px 0 6px; background: #4a4a4a; }
.note-menu { height: 25px; display: flex; justify-content: space-between; }
.note-menu nav { display: flex; gap: 23px; padding-left: 12px; }
.note-menu a { display: flex; align-items: center; height: 24px; padding-top: 4px; border-bottom: 2px solid transparent; }
.note-menu .on { font-weight: 700; color: #fff; border-color: #b4a7d6; }
.note-actions { display: flex; gap: 14px; align-items: center; padding-right: 9px; }
.note-actions button { min-width: 12px; }
.note-actions .share-label { gap: 3px; }
.ribbon { height: 29px; display: flex; align-items: center; padding-left: 5px; color: #d0d0d0; }
.ribbon > i { width: 1px; height: 24px; background: #424242; }
.ribbon button { width: 29px; height: 24px; }
.ribbon .slim { width: 30px; }
.ribbon > .gap { margin-left: 8px; }
.font-name, .font-size { height: 19px; padding-left: 5px; border: 1px solid #282828; background: #383838; }
.font-name { width: 78px; margin-left: 7px; }
.font-size { width: 46px; margin-right: 2px; border-left: 0; }
.ribbon .bold { font-size: 13px; font-weight: 700; }
.ribbon .italic { font: italic 14px "Liberation Serif", serif; }
.ribbon .under { font-size: 13px; text-decoration: underline; text-underline-offset: 2px; }
.ribbon .todo { gap: 14px; width: 50px; height: 26px; margin: 0 3px; padding-left: 6px; border: 1px solid #252525; background: #343434; }
.heading-box { display: flex; align-items: center; width: 124px; height: 24px; margin-left: 3px; padding: 0 2px 0 7px; border: 1px solid #252525; background: #383838; }
.heading-box select { flex: 1; font-size: 13px; color: #b8c8d2; }

.note-body { flex: 1; min-height: 0; display: flex; }
.rail { width: 36px; background: #303030; }
.rail button { width: 100%; height: 32px; padding: 0 0 2px 2px; }
.rail .on { background: #454340; color: #bba9e0; box-shadow: inset 4px 0 0 -1px #b4a7d6; }
.results { width: 226px; background: #252525; border-right: 1px solid #1a1a1a; }
.search-form { display: grid; gap: 6px; padding: 7px 11px 0 12px; }
.search-form input, .search-form label { height: 23px; padding: 0 6px; border: 1px solid #4f4f4f; }
.search-form label { display: flex; align-items: center; padding: 0 6px 0 8px; color: #a4a4a4; }
.search-form select { flex: 1; }
.result-tabs { display: flex; gap: 24px; height: 26px; padding-left: 12px; border-bottom: 1px solid #191919; }
.result-tabs a { padding-top: 9px; border-bottom: 2px solid transparent; }
.result-tabs .on { font-weight: 700; border-color: #b4a7d6; }
.results li { display: flex; align-items: center; gap: 10px; height: 43px; padding: 0 8px 2px 11px; border-left: 2px solid transparent; color: #b0b0b0; }
.results li.on { background: #3c3c3c; border-color: #b4a7d6; }
.results li div { display: grid; gap: 5px; }
.results b { font-weight: 400; color: #e4e4e4; white-space: nowrap; }
.results span { color: #a4a4a4; }

.canvas { flex: 1; min-width: 0; position: relative; background: #20201f; overflow: hidden; }
.ink { display: block; width: 100%; height: 100%; }
.ink .green, .ink .blue, .ink .red, .ink .yellow { fill: none; stroke-linecap: round; stroke-linejoin: round; }
.green { stroke: #07883c; }
.blue { stroke: #76b8f2; }
.red { stroke: #d81828; }
.yellow { stroke: #fbf48c; }
.share-notice { position: absolute; left: 142px; bottom: 5px; width: 304px; height: 37px; display: flex; align-items: center; gap: 7px; padding: 0 7px; border: 1px solid #303030; background: #20201f; font-size: 8px; white-space: nowrap; }
.share-notice button { flex: none; width: 76px; height: 28px; border-radius: 14px; background: #a8c4f4; color: #18325c; font-weight: 600; }
.share-notice a { color: #9db8e4; text-decoration: underline; }

.remote-bar { position: relative; height: 33px; display: flex; align-items: center; border-top: 1px solid #3a3c40; background: #20252d; white-space: nowrap; }
.weather { display: flex; align-items: center; gap: 4px; width: 165px; padding: 0 0 0 16px; color: #ccc; font-size: 8px; }
.remote-search { display: flex; align-items: center; gap: 6px; width: 159px; height: 23px; margin: 0 0 0 9px; padding: 0 3px 0 8px; border-radius: 12px; background: #3b3d43; color: #bbb; }
.remote-search input { flex: 1; }
.remote-search input::placeholder { color: #bbb; }
.remote-apps { display: flex; height: 32px; }
.remote-apps span { position: relative; width: 32px; display: flex; align-items: center; justify-content: center; }
.remote-apps .run::after { content: ""; position: absolute; bottom: 1px; width: 5px; height: 2px; border-radius: 1px; background: #999; }
.remote-apps .person { align-items: flex-start; width: 30px; padding: 4px 0 0 10px; }
.remote-apps .current { background: #2b3037; border-radius: 4px; width: 28px; margin: 0 2px; }
.remote-apps .current::after { width: 11px; background: #5fb9e6; }
.remote-tray { display: flex; gap: 10px; margin-left: auto; }
.remote-lang { width: 40px; text-align: center; font-size: 8px; }
.remote-status { display: flex; align-items: center; gap: 4px; margin-right: 11px; }
.remote-clock { text-align: right; margin-right: 6px; font-size: 9px; }
.copilot { position: relative; margin: 0 15px 0 12px; }
.copilot svg { display: block; }
.copilot b { position: absolute; left: 4px; bottom: -1px; padding: 0 1px; background: #f2b829; color: #222; font-size: 6px; line-height: 6px; }
.presenter, .zoomer { position: absolute; top: 0; height: 24px; display: flex; align-items: center; border-radius: 4px; background: rgba(20, 20, 20, .7); }
.presenter { left: 8px; width: 158px; justify-content: space-between; padding: 0 7px 0 6px; color: #fff; font: 600 11px/16px "Open Sans", sans-serif; }
.zoomer { left: 174px; width: 66px; justify-content: space-around; background: rgba(20, 20, 20, .5); }

/* participants */
.people { width: 246px; display: flex; flex-direction: column; padding: 32px 5px 5px 0; }
.people ul { display: grid; grid-template-columns: 110px 110px; grid-auto-rows: 110px; justify-content: center; }
.people li { display: flex; flex-direction: column; align-items: center; gap: 8px; }
.people li div { display: flex; align-items: center; gap: 12px; height: 16px; font-size: 11px; font-weight: 500; white-space: nowrap; }
.people li svg { color: #eee; }
.avatar { width: 70px; height: 70px; border-radius: 50%; display: flex; align-items: center; justify-content: center; font-size: 27px; font-weight: 600; }
.c1 { background: #e8dedb; color: #5a382c; }
.c2 { background: #f8ebd0; color: #84590c; }
.c3 { background: #ead4e2; color: #64184c; }
.c4 { background: #fdead8; color: #8f5720; }
.c5 { background: #fadfdb; color: #8a3028; }
.c6 { background: #e6eedd; color: #466030; }
.c7 { background: #cfdcec; color: #123a6b; }
.avatar.more { border: 1px solid #616161; background: #292929; }
.self { margin-top: auto; height: 133px; display: flex; align-items: center; justify-content: center; background: #333; }
.self .avatar { width: 56px; height: 56px; font-size: 20px; }

/* host taskbar */
.taskbar { height: 40px; display: flex; align-items: center; padding-right: 4px; background: #1e1e1e; }
.taskbar::after { content: ""; width: 1px; height: 40px; margin-left: 10px; background: #666; }
.taskbar button { height: 40px; }
.start { width: 48px; }
.search { display: flex; align-items: center; width: 288px; height: 40px; padding: 0 3px 0 11px; gap: 12px; border: 1px solid #bbb; background: #f2f2f2; color: #111; }
.search input { flex: 1; font-size: 14px; }
.search input::placeholder { color: #333; }
.brand { display: flex; align-items: center; justify-content: center; gap: 1px; width: 72px; height: 32px; border-radius: 6px; background: #111; color: #f0642a; font: 8px/12px "DejaVu Sans", sans-serif; }
.view { width: 50px; }
.apps { display: flex; gap: 1px; }
.apps button { position: relative; width: 48px; }
.apps .open::after { content: ""; position: absolute; left: 4px; right: 4px; bottom: 0; height: 2px; background: #76b9ed; }
.apps .active { background: #4c4c4c; }
.apps .active::after { left: 0; right: 0; }
.news { gap: 9px; margin-left: auto; font-size: 13px; }
.tray { display: flex; align-items: center; gap: 10px; margin-left: 25px; }
.tray span { font-size: 12px; }
.clock { width: 74px; margin-left: 4px; text-align: center; font-size: 11px; line-height: 18px; }
.alerts { position: relative; width: 36px; }
.alerts b { position: absolute; right: 2px; bottom: 5px; width: 17px; height: 17px; border: 1px solid #888; border-radius: 50%; background: #2b2b2b; font: 600 10px/15px "Open Sans", sans-serif; text-align: center; }
```
